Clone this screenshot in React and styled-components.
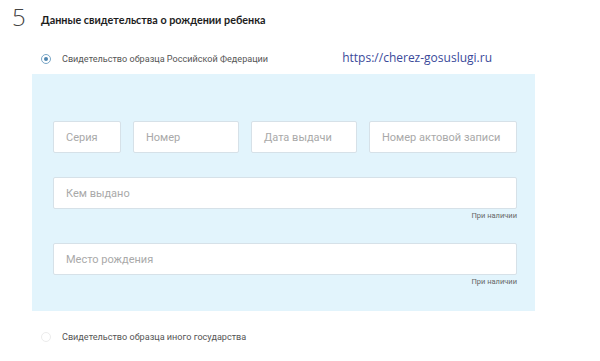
import React from "react";
import styled, { createGlobalStyle } from "styled-components";

const Global = createGlobalStyle`
  html, body { margin: 0; padding: 0; background: #fff; }
  body { font-family: Lato, "Open Sans", sans-serif; width: 600px; height: 361px; overflow: hidden; }
`;

const Page = styled.div`
  padding: 4px 0 0 0;
`;

const Header = styled.div`
  display: flex;
  align-items: center;
  height: 26px;
`;

const StepNum = styled.div`
  width: 41px;
  padding-left: 12px;
  box-sizing: border-box;
  font-family: "Open Sans", sans-serif;
  font-weight: 300;
  font-size: 24px;
  line-height: 24px;
  color: #444;
`;

const Title = styled.div`
  font-size: 10.8px;
  font-weight: 700;
  color: #1d1d1d;
  padding-top: 4px;
`;

const RadioRow = styled.div`
  display: flex;
  align-items: center;
  height: 20px;
  margin-top: ${p => p.$top || 0}px;
  padding-left: 41px;
  width: 494px;
`;

const Radio = styled.span`
  width: 10px;
  height: 10px;
  border-radius: 50%;
  box-sizing: border-box;
  border: 1.5px solid ${p => (p.$on ? "#7aa7c7" : "#ececec")};
  display: flex;
  align-items: center;
  justify-content: center;
  margin-right: 11px;
  &::after {
    content: "";
    width: 4px;
    height: 4px;
    border-radius: 50%;
    background: ${p => (p.$on ? "#4f86b0" : "transparent")};
  }
`;

const RadioLabel = styled.span`
  font-family: Roboto, sans-serif;
  font-size: 9.1px;
  color: #555;
`;

const Url = styled.span`
  margin-left: auto;
  margin-right: 43px;
  font-family: "Open Sans", sans-serif;
  font-size: 12px;
  color: #3a4a9a;
  margin-top: -3px;
`;

const Panel = styled.div`
  margin: 5px 0 0 32px;
  width: 503px;
  height: 237px;
  background: #e2f4fc;
  box-sizing: border-box;
  padding: 47px 18px 0 21px;
`;

const Row = styled.div`
  display: flex;
  gap: 12px;
`;

const Field = styled.div`
  width: ${p => p.$w}px;
  height: 32px;
  background: #fff;
  border: 1px solid #d6e1e8;
  box-sizing: border-box;
  border-radius: 2px;
  display: flex;
  align-items: center;
  padding-left: 12px;
  font-family: Roboto, sans-serif;
  font-size: 11px;
  color: #a9a9a9;
  flex: none;
`;

const Block = styled.div`
  margin-top: ${p => p.$top}px;
  width: 464px;
`;

const Hint = styled.div`
  text-align: right;
  font-family: Roboto, sans-serif;
  font-size: 7.5px;
  color: #666;
  margin-top: 2px;
`;

export default function App() {
  return (
    <Page>
      <Global />
      <Header>
        <StepNum>5</StepNum>
        <Title>Данные свидетельства о рождении ребенка</Title>
      </Header>
      <RadioRow $top={19}>
        <Radio $on />
        <RadioLabel>Свидетельство образца Российской Федерации</RadioLabel>
        <Url>https://cherez-gosuslugi.ru</Url>
      </RadioRow>
      <Panel>
        <Row>
          <Field $w={68}>Серия</Field>
          <Field $w={106}>Номер</Field>
          <Field $w={106}>Дата выдачи</Field>
          <Field $w={148}>Номер актовой записи</Field>
        </Row>
        <Block $top={24}>
          <Field $w={464}>Кем выдано</Field>
          <Hint>При наличии</Hint>
        </Block>
        <Block $top={23}>
          <Field $w={464}>Место рождения</Field>
          <Hint>При наличии</Hint>
        </Block>
      </Panel>
      <RadioRow $top={16}>
        <Radio />
        <RadioLabel>Свидетельство образца иного государства</RadioLabel>
      </RadioRow>
    </Page>
  );
}
